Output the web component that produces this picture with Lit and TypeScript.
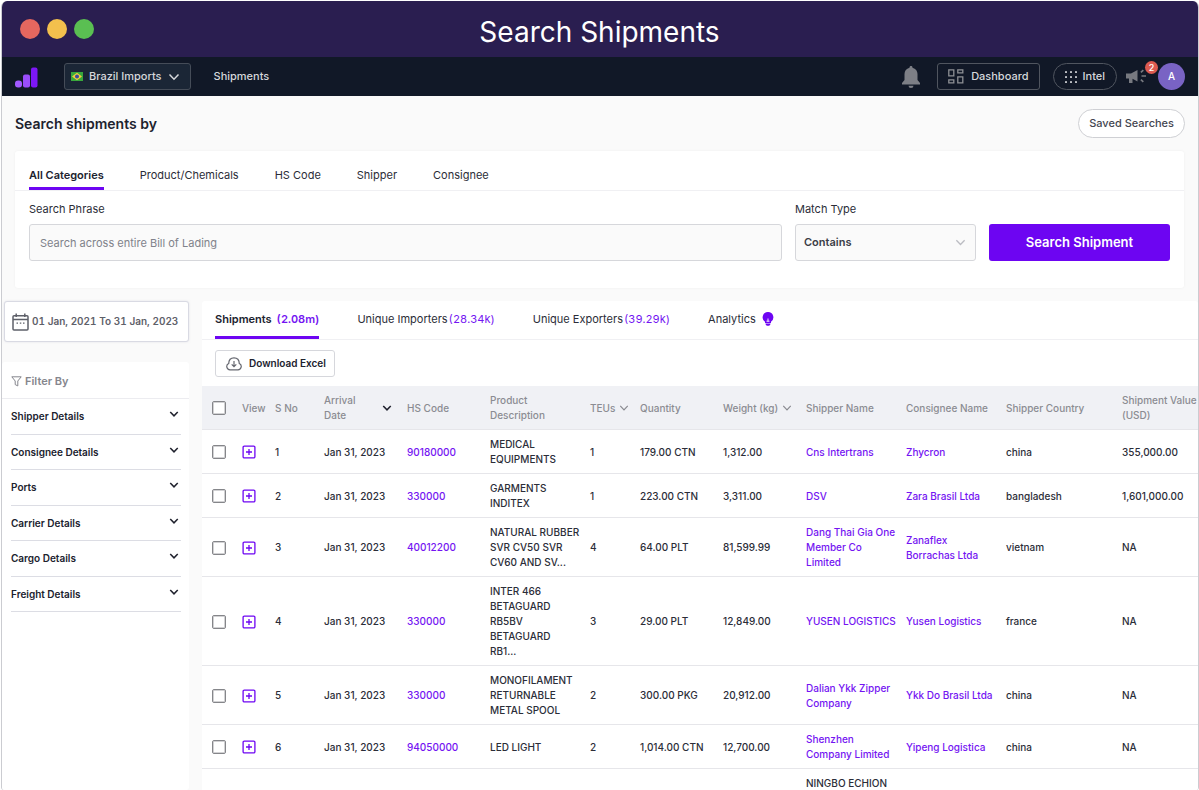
import { LitElement, html, css, svg, nothing } from "lit";
import { customElement, state } from "lit/decorators.js";

interface Shipment {
  no: number;
  date: string;
  hs: string;
  product: string[];
  teus: string;
  quantity: string;
  weight: string;
  shipper: string[];
  consignee: string[];
  country: string;
  value: string;
}

const shipments: Shipment[] = [
  { no: 1, date: "Jan 31, 2023", hs: "90180000", product: ["MEDICAL", "EQUIPMENTS"], teus: "1", quantity: "179.00 CTN", weight: "1,312.00", shipper: ["Cns Intertrans"], consignee: ["Zhycron"], country: "china", value: "355,000.00" },
  { no: 2, date: "Jan 31, 2023", hs: "330000", product: ["GARMENTS", "INDITEX"], teus: "1", quantity: "223.00 CTN", weight: "3,311.00", shipper: ["DSV"], consignee: ["Zara Brasil Ltda"], country: "bangladesh", value: "1,601,000.00" },
  { no: 3, date: "Jan 31, 2023", hs: "40012200", product: ["NATURAL RUBBER", "SVR CV50 SVR", "CV60 AND SV..."], teus: "4", quantity: "64.00 PLT", weight: "81,599.99", shipper: ["Dang Thai Gia One", "Member Co", "Limited"], consignee: ["Zanaflex", "Borrachas Ltda"], country: "vietnam", value: "NA" },
  { no: 4, date: "Jan 31, 2023", hs: "330000", product: ["INTER 466", "BETAGUARD", "RB5BV", "BETAGUARD", "RB1..."], teus: "3", quantity: "29.00 PLT", weight: "12,849.00", shipper: ["YUSEN LOGISTICS"], consignee: ["Yusen Logistics"], country: "france", value: "NA" },
  { no: 5, date: "Jan 31, 2023", hs: "330000", product: ["MONOFILAMENT", "RETURNABLE", "METAL SPOOL"], teus: "2", quantity: "300.00 PKG", weight: "20,912.00", shipper: ["Dalian Ykk Zipper", "Company"], consignee: ["Ykk Do Brasil Ltda"], country: "china", value: "NA" },
  { no: 6, date: "Jan 31, 2023", hs: "94050000", product: ["LED LIGHT"], teus: "2", quantity: "1,014.00 CTN", weight: "12,700.00", shipper: ["Shenzhen", "Company Limited"], consignee: ["Yipeng Logistica"], country: "china", value: "NA" },
];

const lines = (parts: string[]) => parts.map((p, i) => html`${i ? html`<br />` : nothing}${p}`);

const chevron = (size: number, width = 2) => svg`<svg class="chevron" width=${size} height=${size} viewBox="0 0 12 12" fill="none" stroke="currentColor" stroke-width=${width} aria-hidden="true"><path d="M1.500 3.500 6 8.200l4.500-4.700"/></svg>`;

@customElement("app-root")
export class AppRoot extends LitElement {
  @state() private category = "All Categories";
  @state() private view = "Shipments";

  static styles = css`
    :host {
      display: block;
      height: 100vh;
      box-sizing: border-box;
      padding: 1px 0 0 1px;
      background: #fff;
      color: #2b2d38;
      font: 400 11px/15px Inter, "Noto Sans", sans-serif;
    }
    *, *::before, *::after { box-sizing: border-box; }
    button, input, select { font: inherit; color: inherit; margin: 0; }
    button { padding: 0; border: 0; background: none; cursor: pointer; }
    a { color: #7414f2; text-decoration: none; }
    svg { display: block; flex: none; }
    .frame {
      height: 100%;
      display: flex;
      flex-direction: column;
      overflow: hidden;
      border: solid #cbccd1;
      border-width: 0 1px;
      border-radius: 6px 6px 3px 3px;
      background: #fafafa;
    }
    .titlebar {
      flex: none;
      height: 56px;
      display: grid;
      grid-template-columns: 1fr auto 1fr;
      align-items: center;
      padding: 0 19px 0 18px;
      background: #2a1e50;
      color: #fff;
    }
    .dots { display: flex; gap: 7px; }
    .dot { width: 20px; height: 20px; border-radius: 50%; }
    .red { background: #e5675f; }
    .amber { background: #f3c04d; }
    .green { background: #5abf52; }
    .titlebar h1 { margin: 0; padding-top: 6px; font-size: 28px; line-height: 34px; font-weight: 400; }
    .nav {
      flex: none;
      height: 39px;
      display: flex;
      align-items: center;
      padding: 0 13px;
      background: #111827;
      color: #d5d7db;
      font-weight: 500;
    }
    .country {
      display: flex;
      align-items: center;
      gap: 6px;
      height: 27px;
      margin: 0 23px 0 25px;
      padding: 0 10px 0 6px;
      border: 1px solid #454c58;
      border-radius: 3px;
      background: #1b2636;
    }
    .nav a { color: inherit; }
    .bell { margin-left: auto; color: #7d7f86; }
    .outline {
      display: flex;
      align-items: center;
      height: 27px;
      gap: 7px;
      padding: 0 10px;
      border: 1px solid #50555f;
      border-radius: 3px;
    }
    .dashboard { margin: 0 13px 0 17px; }
    .pill { border-radius: 14px; gap: 6px; padding: 0 11px; }
    .news { position: relative; margin-left: 9px; color: #777980; }
    .badge {
      position: absolute;
      top: -8px;
      right: -12px;
      width: 13px;
      height: 13px;
      border-radius: 50%;
      background: #dc5a50;
      color: #fff;
      font-size: 9px;
      line-height: 13px;
      text-align: center;
    }
    .avatar {
      width: 27px;
      height: 27px;
      margin-left: 12px;
      border-radius: 50%;
      background: #7963c4;
      color: #fff;
      font-size: 10px;
    }
    .head {
      flex: none;
      height: 55px;
      display: flex;
      align-items: center;
      justify-content: space-between;
      padding: 0 13px;
    }
    .head h2 { margin: 0; font-size: 14px; line-height: 20px; font-weight: 600; color: #20222e; }
    .saved {
      height: 29px;
      padding: 0 10px;
      border: 1px solid #cfd0d4;
      border-radius: 15px;
      background: #fff;
      font-weight: 500;
      color: #444650;
    }
    .search {
      flex: none;
      margin: 0 14px 13px 13px;
      padding-bottom: 27px;
      background: #fff;
      border-radius: 3px;
      box-shadow: 0 0 3px #0000000d;
    }
    .tabs { display: flex; gap: 36px; padding: 0 14px; border-bottom: 1px solid #f0f0f3; }
    .tab {
      display: flex;
      align-items: center;
      height: 39px;
      padding-top: 12px;
      border-bottom: 3px solid transparent;
      white-space: nowrap;
    }
    .tab.on { border-color: #6d05f2; font-weight: 600; color: #20222e; }
    .fields {
      display: grid;
      grid-template-columns: minmax(0, 1fr) 181px 181px;
      gap: 7px 13px;
      padding: 11px 14px 0;
    }
    .text, .select select {
      width: 100%;
      height: 37px;
      padding: 0 10px;
      border: 1px solid #d6d7db;
      border-radius: 3px;
      background: #fafafa;
      outline: 0;
    }
    .text::placeholder { color: #80828a; opacity: 1; }
    .select { position: relative; color: #bbbcc2; }
    .select select { appearance: none; padding: 0 8px; font-weight: 600; color: #3b3d47; }
    .select .chevron { position: absolute; right: 10px; top: 13px; pointer-events: none; }
    .submit {
      grid-column: 3;
      height: 37px;
      border-radius: 3px;
      background: #6d05f2;
      color: #fff;
      font-size: 13px;
      font-weight: 600;
    }
    .body {
      flex: 1;
      min-height: 0;
      display: grid;
      grid-template-columns: 187px minmax(0, 1fr);
      gap: 13px;
    }
    .side { display: flex; flex-direction: column; gap: 20px; min-height: 0; }
    .date {
      flex: none;
      display: flex;
      align-items: center;
      gap: 3px;
      height: 41px;
      margin: 0 0 0 2px;
      padding: 0 7px;
      border: 1px solid #d9dae3;
      border-radius: 3px;
      background: #fff;
      box-shadow: 0 0 2px #c9cad880;
      color: #5e6069;
      font-size: 10px;
      font-weight: 600;
      font-variant-numeric: tabular-nums;
      white-space: nowrap;
    }
    .filters { flex: 1; background: #fff; border-radius: 3px; }
    .filters h3 {
      display: flex;
      align-items: center;
      gap: 3px;
      height: 37px;
      margin: 0;
      padding: 2px 9px 0;
      border-bottom: 1px solid #ececf0;
      font-size: 11px;
      font-weight: 600;
      color: #85868d;
    }
    .groups { display: grid; grid-auto-rows: 1fr; height: 213px; padding: 0 8px 0 9px; }
    .group {
      display: flex;
      justify-content: space-between;
      align-items: center;
      padding: 1px 2px 0 0;
      border-bottom: 1px solid #dcdde4;
      font-size: 10px;
      font-weight: 600;
      color: #20222e;
    }
    .group .chevron { margin-bottom: 5px; }
    .results { background: #fff; min-width: 0; overflow: hidden; border-radius: 3px 3px 0 0; }
    .results .tabs { gap: 38px; padding: 0 13px; }
    .results .tab { height: 38px; padding-top: 1px; }
    .count { color: #7414f2; padding-left: 1px; font-variant-numeric: tabular-nums; }
    .on .count { padding-left: 5px; }
    .bulb { margin-left: 6px; color: #6d05f2; }
    .download {
      display: flex;
      align-items: center;
      gap: 7px;
      height: 27px;
      margin: 10px 13px 9px;
      padding: 0 8px 0 10px;
      border: 1px solid #d6d7dc;
      border-radius: 3px;
      font-size: 10px;
      font-weight: 600;
      color: #20222e;
    }
    .download svg { color: #666870; }
    table {
      width: 100%;
      table-layout: fixed;
      border-collapse: separate;
      border-spacing: 0;
      font-size: 10px;
      font-weight: 500;
    }
    th, td {
      padding: 7px 0 6px 7px;
      border-bottom: 1px solid #e6e6ea;
      text-align: left;
      vertical-align: middle;
      white-space: nowrap;
    }
    th { background: #f0f1f5; color: #8b8c92; font-weight: 500; }
    th:first-child, td:first-child { padding-left: 10px; }
    .c33 { width: 33px; }
    .c49 { width: 49px; }
    .c50 { width: 50px; }
    .c83 { width: 83px; }
    .c100 { width: 100px; }
    .c116 { width: 116px; }
    .sort { display: flex; align-items: center; gap: 4px; text-align: left; }
    .arrival { width: 100%; justify-content: space-between; padding-right: 8px; color: #20222e; }
    .arrival span { color: #8b8c92; }
    .check {
      display: block;
      appearance: none;
      width: 14px;
      height: 14px;
      border: 1px solid #85868a;
      border-radius: 2px;
      background: #fff;
      box-shadow: inset 0 0 0 1px #d2d2d4;
    }
    .expand { display: block; color: #6d05f2; }
  `;

  private tab(name: string, active: boolean, pick: () => void, extra: unknown = nothing) {
    return html`<button class="tab ${active ? "on" : ""}" role="tab" aria-selected=${active} @click=${pick}>${name}${extra}</button>`;
  }

  private row(s: Shipment) {
    return html`<tr>
      <td><input class="check" type="checkbox" aria-label="Select shipment ${s.no}" /></td>
      <td>
        <button class="expand" aria-label="View shipment ${s.no}">
          <svg width="14" height="14" viewBox="0 0 14 14" fill="none" stroke="currentColor" stroke-width="1.3">
            <rect x="1.1" y="1.1" width="11.8" height="11.8" rx="1.2" />
            <path d="M7 4v6M4 7h6" />
          </svg>
        </button>
      </td>
      <td>${s.no}</td>
      <td>${s.date}</td>
      <td><a href="#hs">${s.hs}</a></td>
      <td>${lines(s.product)}</td>
      <td>${s.teus}</td>
      <td>${s.quantity}</td>
      <td>${s.weight}</td>
      <td><a href="#shipper">${lines(s.shipper)}</a></td>
      <td><a href="#consignee">${lines(s.consignee)}</a></td>
      <td>${s.country}</td>
      <td>${s.value}</td>
    </tr>`;
  }

  render() {
    const views: [string, string][] = [
      ["Shipments", "(2.08m)"],
      ["Unique Importers", "(28.34k)"],
      ["Unique Exporters", "(39.29k)"],
    ];
    return html`<div class="frame">
      <header class="titlebar">
        <div class="dots"><span class="dot red"></span><span class="dot amber"></span><span class="dot green"></span></div>
        <h1>Search Shipments</h1>
      </header>
      <nav class="nav">
        <svg width="24" height="22" viewBox="0 0 24 22" aria-hidden="true">
          <rect x="0" y="14.500" width="7" height="7" rx="3" fill="#a259ff" />
          <rect x="8" y="8.500" width="7" height="13" rx="2" fill="#9a4dfb" />
          <rect x="16" y="1.500" width="6.500" height="20" rx="2" fill="#7d17f5" />
        </svg>
        <button class="country">
          <svg width="12" height="9" viewBox="0 0 12 9" aria-hidden="true">
            <rect width="12" height="9" fill="#38a83c" /><path d="M6 .8 11 4.500 6 8.200 1 4.500z" fill="#f2cf3d" /><circle cx="6" cy="4.500" r="2" fill="#394b9c" />
          </svg>
          Brazil Imports ${chevron(12, 1.500)}
        </button>
        <a href="#shipments">Shipments</a>
        <button class="bell" aria-label="Notifications">
          <svg width="18" height="22" viewBox="0 0 18 22" fill="currentColor"><path d="M9 0c1 0 1.500.7 1.500 1.700C13.700 2.500 15.500 5 15.500 8v6l2.500 3v1.500H0V17l2.500-3V8c0-3 1.800-5.500 5-6.300C7.500.7 8 0 9 0zM6.500 19.700h5A2.500 2.300 0 0 1 6.500 19.700z" /></svg>
        </button>
        <button class="outline dashboard">
          <svg width="16" height="15" viewBox="0 0 16 15" fill="none" stroke="#8e9095" stroke-width="1.300"><path d="M.8.8h5v6h-5zM9.800.8h5v3h-5zM.8 10.800h5v3h-5zM9.800 7.800h5v6h-5z" /></svg>
          Dashboard
        </button>
        <button class="outline pill">
          <svg width="12" height="12" viewBox="0 0 12 12" fill="#b9bbc0">
            ${[0, 5, 10].map((y) => [0, 5, 10].map((x) => svg`<rect x=${x} y=${y} width="2" height="2" rx=".6"/>`))}
          </svg>
          Intel
        </button>
        <button class="news" aria-label="Announcements">
          <svg width="20" height="15" viewBox="0 0 20 15" fill="currentColor"><path d="M0 4.500h5L11.500 1v11.500L6.500 9.800V14H3V9.500H0zM14.300 2.800 16.800.5l1.100 1.200-2.500 2.300zM15.500 6.200H20v1.600h-4.500zM14.300 11.200l1.100-1.200 2.500 2.300-1.100 1.200z" /></svg>
          <span class="badge">2</span>
        </button>
        <button class="avatar" aria-label="Account">A</button>
      </nav>

      <div class="head">
        <h2>Search shipments by</h2>
        <button class="saved">Saved Searches</button>
      </div>

      <section class="search">
        <div class="tabs" role="tablist">
          ${["All Categories", "Product/Chemicals", "HS Code", "Shipper", "Consignee"].map((c) =>
            this.tab(c, c === this.category, () => (this.category = c)))}
        </div>
        <div class="fields">
          <label for="phrase">Search Phrase</label>
          <label for="match">Match Type</label>
          <span></span>
          <input id="phrase" class="text" type="text" placeholder="Search across entire Bill of Lading" />
          <div class="select">
            <select id="match"><option>Contains</option></select>
            ${chevron(11, 1.400)}
          </div>
          <button class="submit">Search Shipment</button>
        </div>
      </section>

      <div class="body">
        <aside class="side">
          <button class="date">
            <svg width="17" height="18" viewBox="0 0 17 18" fill="none" stroke="currentColor" stroke-width="1.500"><rect x="1" y="2.800" width="15" height="14.200" rx="1" /><path d="M1 6.500h15M4.200.5v3.500M12.800.5v3.500" /><path d="M4.500 10.200h1.500M7.800 10.200h1.500M11 10.200h1.500" stroke-width="1.300" /></svg>
            01 Jan, 2021 To 31 Jan, 2023
          </button>
          <div class="filters">
            <h3>
              <svg width="11" height="11" viewBox="0 0 11 11" fill="none" stroke="currentColor"><path d="M.8.8h9.400L6.800 5v4.900L4.200 8.600V5z" /></svg>
              Filter By
            </h3>
            <div class="groups">
              ${["Shipper Details", "Consignee Details", "Ports", "Carrier Details", "Cargo Details", "Freight Details"].map(
                (g) => html`<button class="group" aria-expanded="false">${g}${chevron(10, 1.800)}</button>`)}
            </div>
          </div>
        </aside>

        <main class="results">
          <div class="tabs" role="tablist">
            ${views.map(([name, count]) =>
              this.tab(name, name === this.view, () => (this.view = name), html`<span class="count">${count}</span>`))}
            ${this.tab("Analytics", this.view === "Analytics", () => (this.view = "Analytics"),
              html`<svg class="bulb" width="12" height="14" viewBox="0 0 12 14"><path d="M6 0a5.300 5.300 0 0 1 3 9.700V11H3V9.700A5.300 5.300 0 0 1 6 0zM3.500 11.500h5C8.500 13 7.400 13.800 6 13.800S3.500 13 3.500 11.500z" fill="currentColor" /><path d="M6 9.500V6.500M4.500 9.200h3" fill="none" stroke="#fff" stroke-width=".9" /></svg>`)}
          </div>
          <button class="download">
            <svg width="16" height="14" viewBox="0 0 16 14" fill="none" stroke="currentColor" stroke-width="1.200"><path d="M4 12.800a3.300 3.300 0 0 1-1.300-6.300C2.800 3 5 .8 8 .8s5.200 2.200 5.300 5.700A3.300 3.300 0 0 1 12 12.800z" /><path d="M8 4v5.500M5.700 7.300 8 9.600l2.300-2.300" /></svg>
            Download Excel
          </button>
          <table>
            <colgroup>
              <col class="c33" /><col class="c33" /><col class="c49" /><col class="c83" /><col class="c83" /><col class="c100" /><col class="c50" /><col class="c83" /><col class="c83" /><col class="c100" /><col class="c100" /><col class="c116" /><col />
            </colgroup>
            <thead>
              <tr>
                <th><input class="check" type="checkbox" aria-label="Select all shipments" /></th>
                <th>View</th>
                <th>S No</th>
                <th><button class="sort arrival"><span>Arrival<br />Date</span>${chevron(10, 1.800)}</button></th>
                <th>HS Code</th>
                <th>Product<br />Description</th>
                <th><button class="sort">TEUs ${chevron(10, 1.500)}</button></th>
                <th>Quantity</th>
                <th><button class="sort">Weight (kg) ${chevron(10, 1.500)}</button></th>
                <th>Shipper Name</th>
                <th>Consignee Name</th>
                <th>Shipper Country</th>
                <th>Shipment Value<br />(USD)</th>
              </tr>
            </thead>
            <tbody>
              ${shipments.map((s) => this.row(s))}
              <tr><td colspan="9"></td><td colspan="4">NINGBO ECHION</td></tr>
            </tbody>
          </table>
        </main>
      </div>
    </div>`;
  }
}
